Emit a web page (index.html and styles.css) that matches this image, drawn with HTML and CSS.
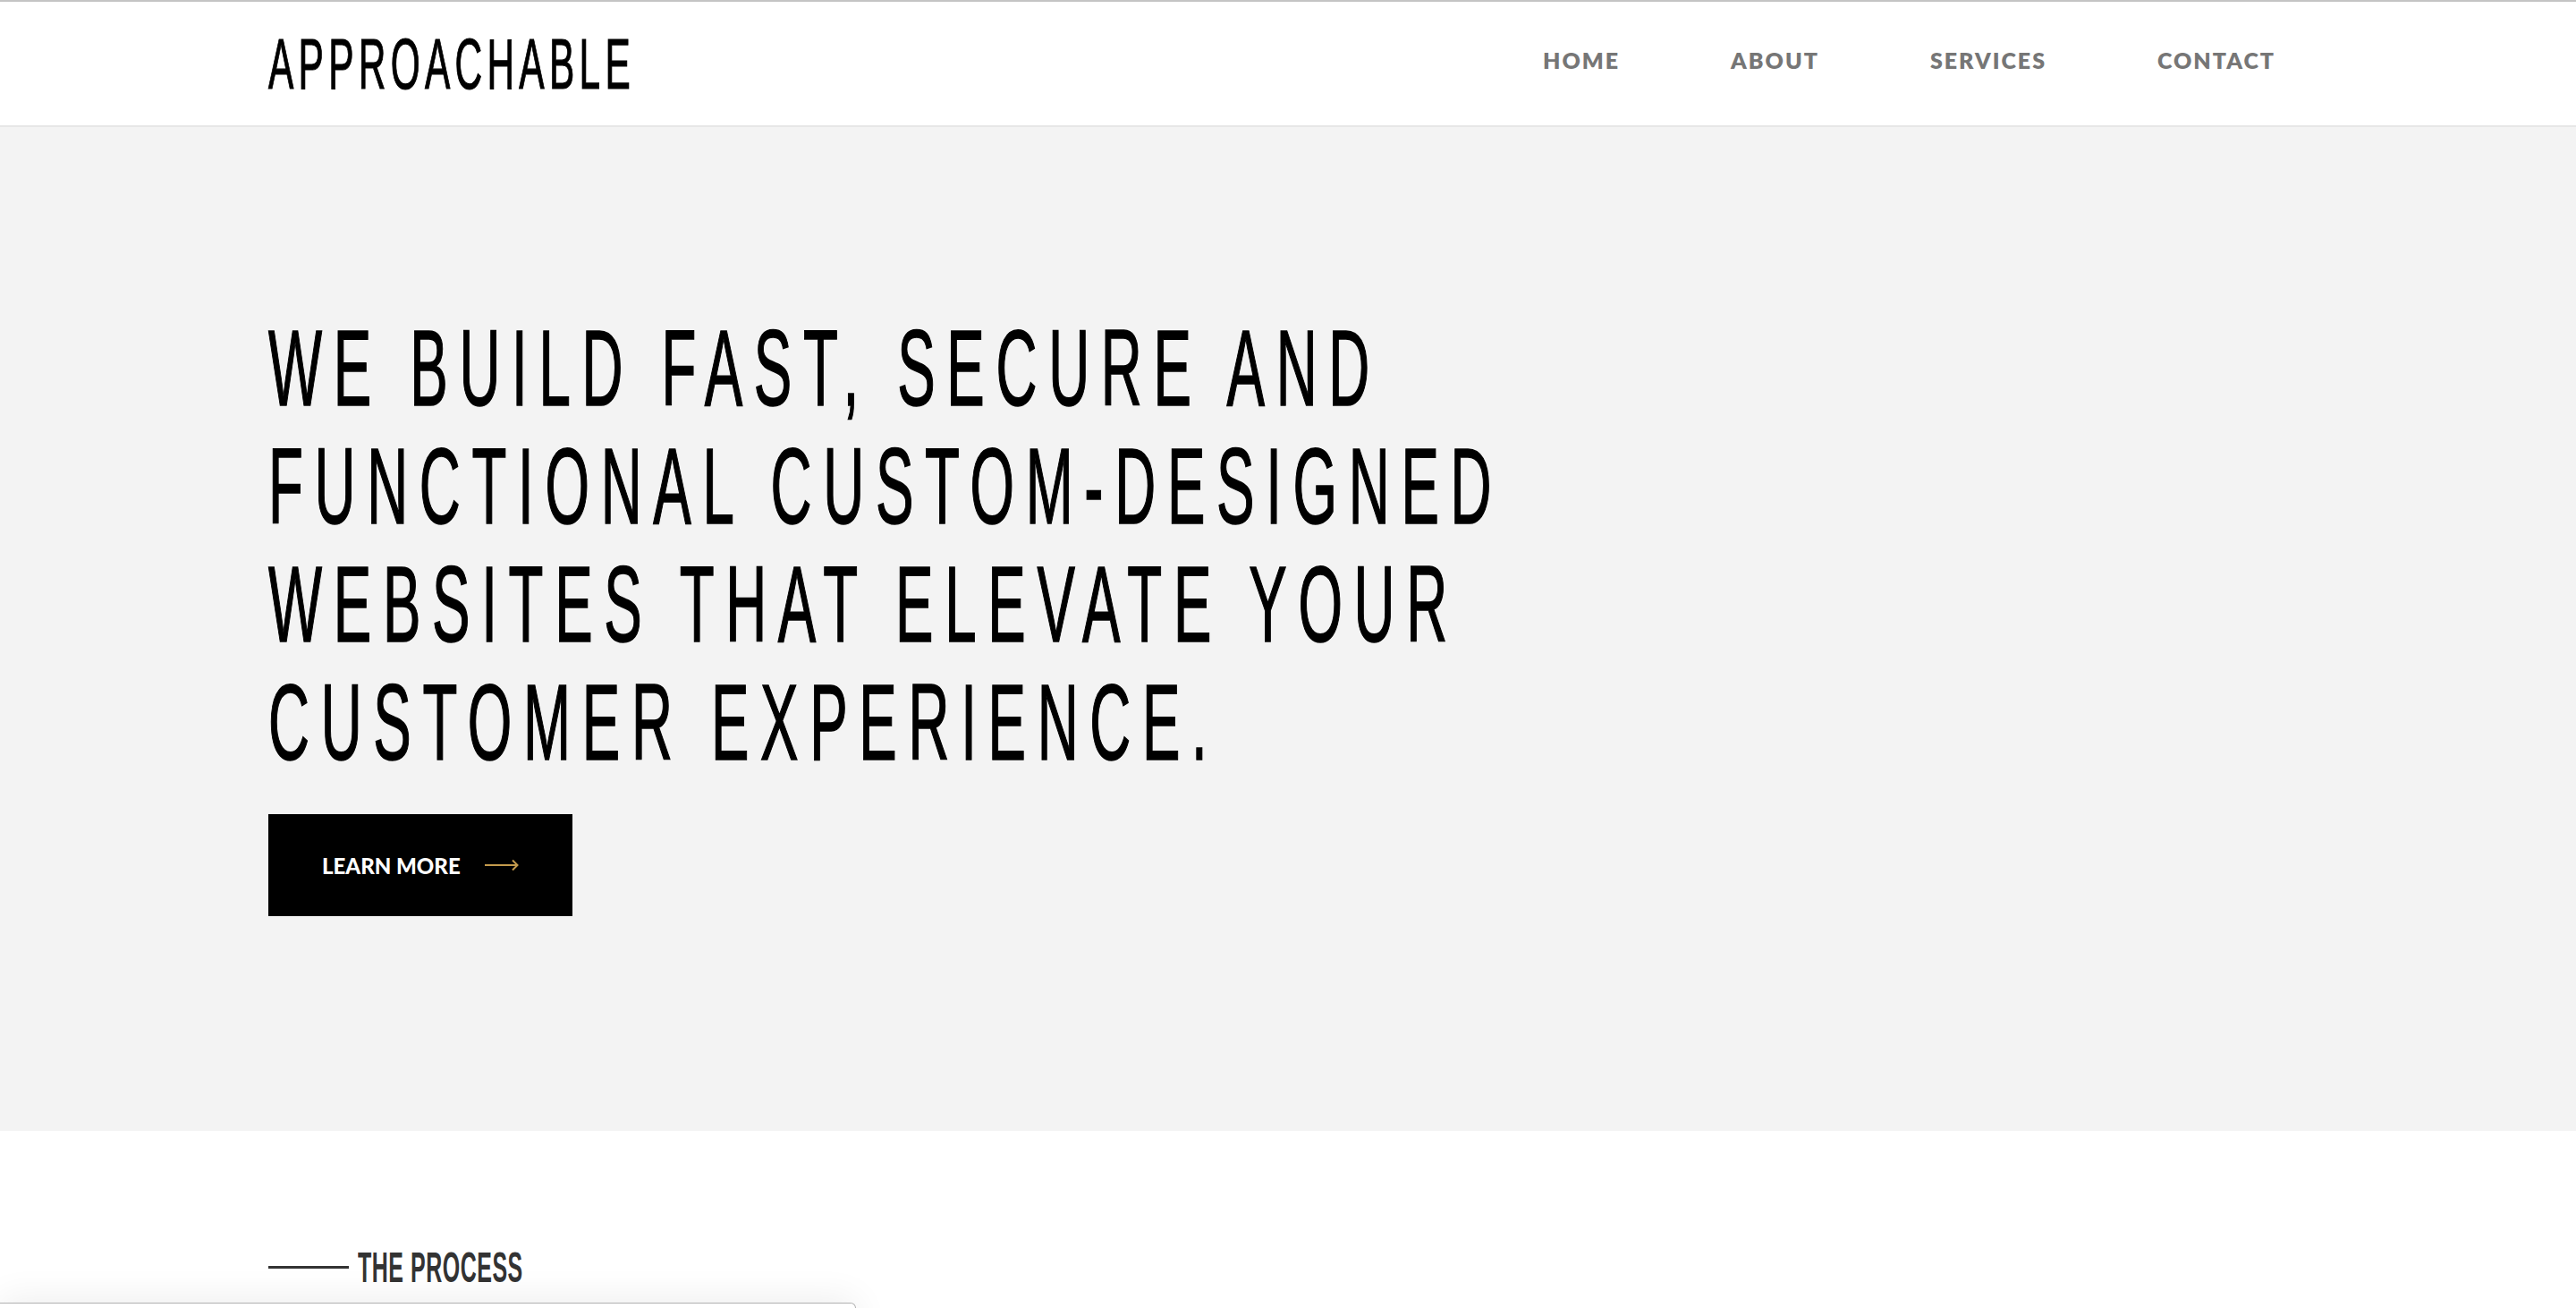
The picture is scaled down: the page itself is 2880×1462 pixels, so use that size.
FILE: index.html
```html
<!DOCTYPE html>
<html lang="en">
<head>
<meta charset="utf-8">
<title>Approachable</title>
<link rel="stylesheet" href="styles.css">
</head>
<body>
<header class="site-header">
  <div class="container header-inner">
    <a class="logo" href="#"><span class="logo-text">APPROACHABLE</span></a>
    <nav class="main-nav">
      <a href="#">HOME</a>
      <a href="#">ABOUT</a>
      <a href="#">SERVICES</a>
      <a href="#">CONTACT</a>
    </nav>
  </div>
</header>

<section class="hero">
  <div class="container">
    <h1 class="hero-title"><span class="hero-line">WE BUILD FAST, SECURE AND</span><span class="hero-line">FUNCTIONAL CUSTOM-DESIGNED</span><span class="hero-line">WEBSITES THAT ELEVATE YOUR</span><span class="hero-line">CUSTOMER EXPERIENCE.</span></h1>
    <a class="btn-learn" href="#">
      <span class="btn-label">LEARN MORE</span>
      <svg class="btn-arrow" width="38" height="14" viewBox="0 0 38 14" aria-hidden="true">
        <path d="M0 7 H36.5" fill="none" stroke="#c49b4d" stroke-width="2"/>
        <path d="M31 1.5 L36.5 7 L31 12.5" fill="none" stroke="#c49b4d" stroke-width="2"/>
      </svg>
    </a>
  </div>
</section>

<section class="process">
  <div class="container">
    <div class="section-label">
      <span class="label-rule"></span>
      <h2 class="label-text"><span class="label-inner">THE PROCESS</span></h2>
    </div>
  </div>
</section>

<div class="bottom-panel"></div>
</body>
</html>
```

FILE: styles.css
```css
* {
  box-sizing: border-box;
}

html, body {
  margin: 0;
  padding: 0;
}

body {
  background: #ffffff;
  font-family: "Liberation Sans", Arial, sans-serif;
  color: #000;
  overflow: hidden;
  height: 1462px;
}

a {
  text-decoration: none;
  color: inherit;
}

.container {
  width: 2280px;
  margin: 0 auto;
}

/* Header */
.site-header {
  background: #ffffff;
  border-top: 2px solid #c4c4c4;
  border-bottom: 2px solid #e7e7e7;
  height: 142px;
}

.header-inner {
  height: 100%;
  display: flex;
  align-items: center;
  justify-content: space-between;
}

.logo {
  display: block;
  width: 420px;
  overflow: visible;
  white-space: nowrap;
}

.logo-text {
  display: inline-block;
  font-family: "Liberation Sans", Arial, sans-serif;
  font-size: 80px;
  line-height: 80px;
  letter-spacing: 10px;
  color: #000;
  -webkit-text-stroke: 1.2px #000;
  transform: scaleX(0.53);
  transform-origin: left center;
  margin-top: 2px;
}

.main-nav {
  display: flex;
  gap: 124px;
  margin-right: 36px;
  margin-bottom: 9px;
}

.main-nav a {
  font-family: Lato, "Open Sans", sans-serif;
  font-weight: 800;
  font-size: 25px;
  letter-spacing: 2px;
  color: #767676;
}

/* Hero */
.hero {
  background: #f3f3f3;
  padding-top: 203px;
  padding-bottom: 240px;
}

.hero-title {
  margin: 0;
  font-family: "Liberation Sans", Arial, sans-serif;
  font-weight: 400;
  font-size: 120px;
  line-height: 132px;
  letter-spacing: 24px;
  color: #000;
  -webkit-text-stroke: 1.6px #000;
  white-space: nowrap;
  transform: scaleX(0.53);
  transform-origin: left top;
  width: max-content;
}

.hero-line {
  display: block;
}

.btn-learn {
  margin-top: 37px;
  display: flex;
  align-items: center;
  width: 340px;
  height: 114px;
  background: #000;
  padding-left: 60px;
}

.btn-label {
  font-family: Lato, "Open Sans", sans-serif;
  font-weight: 900;
  font-size: 24px;
  color: #fff;
  letter-spacing: 0;
}

.btn-arrow {
  margin-left: 27px;
  display: block;
}

/* Process */
.process {
  background: #ffffff;
  padding-top: 128px;
}

.section-label {
  display: flex;
  align-items: center;
  gap: 10px;
}

.label-rule {
  display: block;
  width: 90px;
  height: 3px;
  background: #333;
}

.label-text {
  margin: 0;
  font-size: 49px;
  line-height: 49px;
  font-weight: 700;
  color: #333;
  width: 190px;
  white-space: nowrap;
}

.label-inner {
  display: inline-block;
  transform: scaleX(0.51);
  transform-origin: left center;
  letter-spacing: 1px;
}

/* Bottom overlay panel */
.bottom-panel {
  position: fixed;
  left: 0;
  top: 1456px;
  width: 957px;
  height: 60px;
  background: #fff;
  border: 1px solid #b0b0b0;
  border-left: none;
  border-top-right-radius: 6px;
  box-shadow: 0 -4px 40px rgba(0, 0, 0, 0.07);
}
```
